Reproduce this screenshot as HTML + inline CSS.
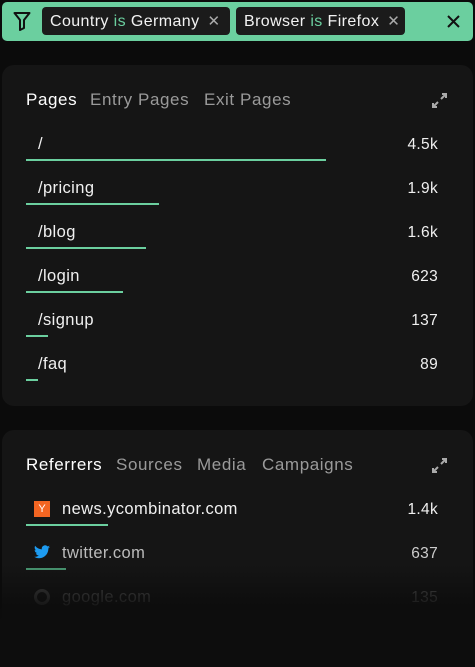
<!DOCTYPE html>
<html style="width:475px;height:667px;overflow:hidden"><head><meta charset="utf-8"><style>
*{margin:0;padding:0;box-sizing:border-box}
body{width:475px;height:667px;background:#0b0b0b;font-family:"Liberation Sans",sans-serif;position:relative;overflow:hidden;color:#fff}
.abs{position:absolute}
.bar{position:absolute;left:2px;top:2px;width:471px;height:39px;background:#6bcf9f;border-radius:5px}
.chip{position:absolute;top:5px;height:28px;background:#1b1b1b;border-radius:4px;font-size:16px;letter-spacing:.4px;line-height:29px;padding-left:8px;color:#f2f2f2;white-space:nowrap}
.chip .g{color:#6bcf9f}
.chip .x{color:#aaa;margin-left:8px;font-size:15px}
.card{position:absolute;left:2px;width:471px;background:#151515;border-radius:12px}
.tab{position:absolute;font-size:17px;letter-spacing:.6px;color:#9a9a9a;top:0}
.tab.a{color:#fff}
.lbl{position:absolute;left:38px;font-size:16.5px;letter-spacing:.4px;color:#f0f0f0}
.val{position:absolute;right:37px;font-size:15.5px;letter-spacing:.3px;color:#f0f0f0;text-align:right}
.ln{position:absolute;left:26px;height:2px;background:#6bcf9f}
</style></head><body>
<div class="bar">
<svg class="abs" style="left:11px;top:9px" width="18" height="20" viewBox="0 0 18 20"><path d="M1.5 2h15l-5.5 7v8l-4 2v-10z" fill="none" stroke="#111" stroke-width="2" stroke-linejoin="round"/></svg>
<div class="chip" style="left:40px;width:188px">Country <span class="g">is</span> Germany<span class="x">✕</span></div>
<div class="chip" style="left:234px;width:169px">Browser <span class="g">is</span> Firefox<span class="x">✕</span></div>
<svg class="abs" style="left:445px;top:13px" width="13" height="13" viewBox="0 0 13 13"><path d="M1 1l11 11M12 1L1 12" stroke="#111" stroke-width="2"/></svg>
</div>

<div class="card" style="top:65px;height:341px"></div>
<div class="tab a" style="left:26px;top:90px">Pages</div>
<div class="tab" style="left:90px;top:90px">Entry Pages</div>
<div class="tab" style="left:204px;top:90px">Exit Pages</div>
<svg class="abs" style="left:431px;top:92px" width="17" height="17" viewBox="0 0 17 17"><path d="M10 7l5-5M11 2h4v4M7 10l-5 5M2 11v4h4" stroke="#aaa" stroke-width="2" fill="none"/></svg>

<div class="lbl" style="top:135px">/</div><div class="val" style="top:136px">4.5k</div><div class="ln" style="top:159px;width:300px"></div>
<div class="lbl" style="top:179px">/pricing</div><div class="val" style="top:180px">1.9k</div><div class="ln" style="top:203px;width:133px"></div>
<div class="lbl" style="top:223px">/blog</div><div class="val" style="top:224px">1.6k</div><div class="ln" style="top:247px;width:120px"></div>
<div class="lbl" style="top:267px">/login</div><div class="val" style="top:268px">623</div><div class="ln" style="top:291px;width:97px"></div>
<div class="lbl" style="top:311px">/signup</div><div class="val" style="top:312px">137</div><div class="ln" style="top:335px;width:22px"></div>
<div class="lbl" style="top:355px">/faq</div><div class="val" style="top:356px">89</div><div class="ln" style="top:379px;width:12px"></div>

<div class="card" style="top:430px;height:237px;border-radius:12px 12px 0 0"></div>
<div class="tab a" style="left:26px;top:455px">Referrers</div>
<div class="tab" style="left:116px;top:455px">Sources</div>
<div class="tab" style="left:197px;top:455px">Media</div>
<div class="tab" style="left:262px;top:455px">Campaigns</div>
<svg class="abs" style="left:431px;top:457px" width="17" height="17" viewBox="0 0 17 17"><path d="M10 7l5-5M11 2h4v4M7 10l-5 5M2 11v4h4" stroke="#aaa" stroke-width="2" fill="none"/></svg>

<div class="abs" style="left:34px;top:501px;width:16px;height:16px;background:#f26522;color:#fff;font-size:11px;text-align:center;line-height:16px">Y</div>
<div class="lbl" style="left:62px;top:500px">news.ycombinator.com</div><div class="val" style="top:501px">1.4k</div><div class="ln" style="top:524px;width:82px"></div>
<svg class="abs" style="left:34px;top:545px" width="16" height="14" viewBox="0 0 24 20"><path d="M24 2.4a9.8 9.8 0 0 1-2.8.8A4.9 4.9 0 0 0 23.3.4a9.9 9.9 0 0 1-3.1 1.2A4.9 4.9 0 0 0 11.8 6 14 14 0 0 1 1.7.9a4.9 4.9 0 0 0 1.5 6.6A4.9 4.9 0 0 1 1 6.9a4.9 4.9 0 0 0 3.9 4.8 4.9 4.9 0 0 1-2.2.1 4.9 4.9 0 0 0 4.6 3.4A9.9 9.9 0 0 1 0 17.2 14 14 0 0 0 7.5 19.4c9.1 0 14-7.5 14-14v-.6A10 10 0 0 0 24 2.4z" fill="#1d9bf0"/></svg>
<div class="lbl" style="left:62px;top:544px;color:#bbb">twitter.com</div><div class="val" style="top:545px;color:#ccc">637</div><div class="ln" style="top:568px;width:40px;background:#4a9a74"></div>
<div class="abs" style="left:34px;top:589px;width:16px;height:16px;border-radius:50%;border:3px solid #444"></div>
<div class="lbl" style="left:62px;top:588px;color:#555">google.com</div><div class="val" style="top:589px;color:#555">135</div>
<div class="abs" style="left:0;top:565px;width:475px;height:102px;background:linear-gradient(rgba(11,11,11,0),rgba(11,11,11,.8) 40%,#0d0d0d 55%)"></div>
</body></html>
